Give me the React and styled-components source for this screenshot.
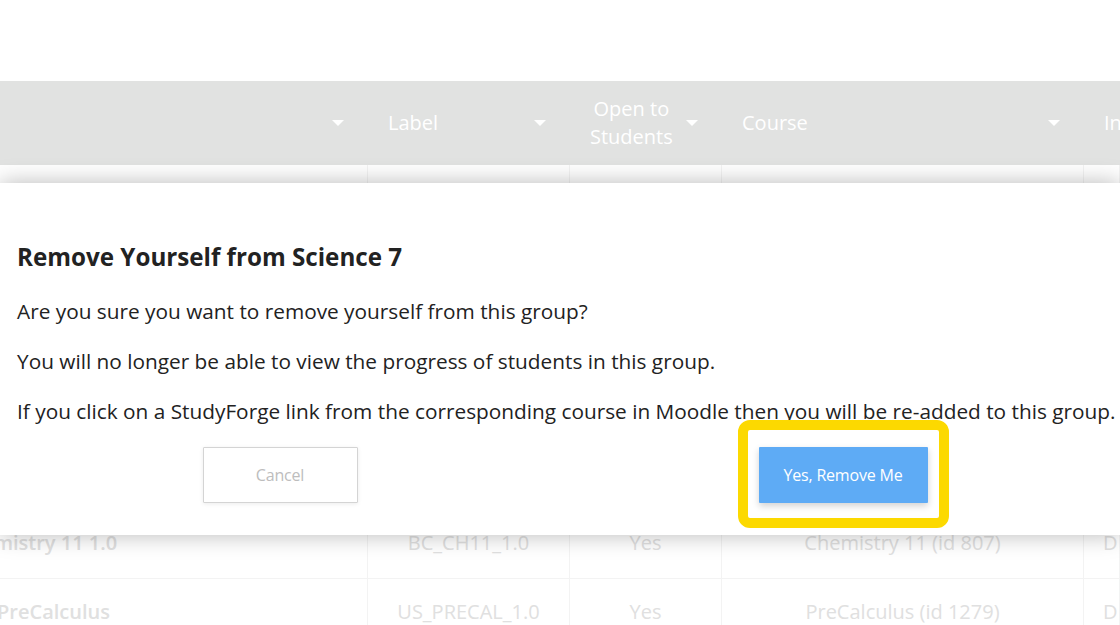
import React from 'react';
import styled, { createGlobalStyle } from 'styled-components';

const GlobalStyle = createGlobalStyle`
  html, body {
    margin: 0;
    padding: 0;
    background: #ffffff;
    font-family: "Open Sans", "Liberation Sans", sans-serif;
  }
`;

// Página com a tabela esmaecida ao fundo
const Page = styled.div`
  position: relative;
  width: 1120px;
  height: 625px;
  overflow: hidden;
  background: #ffffff;
  padding-top: 81px;
  box-sizing: border-box;
`;

const COLS = '368px 202px 152px 362px 1fr';

const HeaderRow = styled.div`
  display: grid;
  grid-template-columns: ${COLS};
  height: 84px;
  background: #e1e2e1;
`;

const HeaderCell = styled.div`
  display: flex;
  align-items: center;
  justify-content: space-between;
  padding: 0 24px 0 20px;
  color: #ffffff;
  font-size: 20px;
  line-height: 28px;
  font-weight: 400;
`;

const HeaderLabel = styled.span`
  text-align: ${({ center }) => (center ? 'center' : 'left')};
  white-space: pre-line;
`;

const Caret = styled.span`
  width: 0;
  height: 0;
  margin-left: auto;
  border-left: 6px solid transparent;
  border-right: 6px solid transparent;
  border-top: 6px solid #ffffff;
`;

const BodyRow = styled.div`
  display: grid;
  grid-template-columns: ${COLS};
  height: 69px;
  border-bottom: 1px solid #f3f3f3;
  box-sizing: border-box;
`;

const BodyCell = styled.div`
  display: flex;
  align-items: center;
  justify-content: ${({ left }) => (left ? 'flex-start' : 'center')};
  padding-left: ${({ left }) => (left ? '19px' : '0')};
  padding-bottom: 3px;
  border-right: 1px solid #f3f3f3;
  color: #e0e0e0;
  font-size: 20px;
  font-weight: ${({ bold }) => (bold ? 600 : 400)};
  white-space: nowrap;
`;

const RowName = styled.span`
  margin-left: ${({ shift }) => shift}px;
`;

// Modal de confirmação
const Modal = styled.div`
  position: absolute;
  top: 183px;
  left: 0;
  right: 0;
  height: 352px;
  background: #ffffff;
  box-shadow: 0 0 22px rgba(0, 0, 0, 0.28);
  padding: 58px 0 0 17px;
  box-sizing: border-box;
  color: #222222;
`;

const Title = styled.h2`
  margin: 0 0 24px;
  font-size: 24.2px;
  line-height: 32px;
  font-weight: 700;
`;

const Text = styled.p`
  margin: 0 0 21px;
  font-size: 20.8px;
  line-height: 29px;
  white-space: nowrap;
`;

const Actions = styled.div`
  display: grid;
  grid-template-columns: 1fr 1fr;
  margin-left: -17px;
  margin-top: 14px;
`;

const ActionSlot = styled.div`
  display: flex;
  justify-content: center;
`;

const Button = styled.button`
  height: 56px;
  padding: 0;
  font-family: "Open Sans", "Liberation Sans", sans-serif;
  font-size: 16px;
  letter-spacing: -0.2px;
  cursor: pointer;
  border-radius: 1px;
  width: ${({ primary }) => (primary ? '169px' : '155px')};
  color: ${({ primary }) => (primary ? '#ffffff' : '#bdbdbd')};
  background: ${({ primary }) => (primary ? '#5eabf5' : '#ffffff')};
  border: ${({ primary }) => (primary ? 'none' : '1px solid #d4d4d4')};
  box-shadow: ${({ primary }) =>
    primary ? '0 3px 7px rgba(0, 0, 0, 0.18)' : '0 1px 4px rgba(0, 0, 0, 0.08)'};
`;

const Highlighted = styled.div`
  position: relative;
  margin-left: 6px;
`;

// Moldura amarela de destaque
const Highlight = styled.div`
  position: absolute;
  top: -27px;
  bottom: -25px;
  left: -21px;
  right: -21px;
  border: 10px solid #fcd900;
  border-radius: 12px;
  pointer-events: none;
`;

const headers = [
  { label: '', center: false },
  { label: 'Label', center: false },
  { label: 'Open to\nStudents', center: true },
  { label: 'Course', center: false },
  { label: 'In', center: false, noCaret: true },
];

const emptyRow = { name: '', label: '', open: '', course: '', extra: '' };

const rows = [
  emptyRow,
  emptyRow,
  emptyRow,
  emptyRow,
  emptyRow,
  { name: 'Chemistry 11 1.0', shift: -62, label: 'BC_CH11_1.0', open: 'Yes', course: 'Chemistry 11 (id 807)', extra: 'D' },
  { name: 'PreCalculus', shift: -22, label: 'US_PRECAL_1.0', open: 'Yes', course: 'PreCalculus (id 1279)', extra: 'D' },
];

const App = () => (
  <>
    <GlobalStyle />
    <Page>
      <HeaderRow>
        {headers.map((h, i) => (
          <HeaderCell key={i}>
            <HeaderLabel center={h.center}>{h.label}</HeaderLabel>
            {!h.noCaret && <Caret />}
          </HeaderCell>
        ))}
      </HeaderRow>
      {rows.map((r, i) => (
        <BodyRow key={i}>
          <BodyCell left bold>
            <RowName shift={r.shift || 0}>{r.name}</RowName>
          </BodyCell>
          <BodyCell>{r.label}</BodyCell>
          <BodyCell>{r.open}</BodyCell>
          <BodyCell>{r.course}</BodyCell>
          <BodyCell left>{r.extra}</BodyCell>
        </BodyRow>
      ))}

      <Modal>
        <Title>Remove Yourself from Science 7</Title>
        <Text>Are you sure you want to remove yourself from this group?</Text>
        <Text>You will no longer be able to view the progress of students in this group.</Text>
        <Text>
          If you click on a StudyForge link from the corresponding course in Moodle then you will be re-added to this group.
        </Text>
        <Actions>
          <ActionSlot>
            <Button>Cancel</Button>
          </ActionSlot>
          <ActionSlot>
            <Highlighted>
              <Button primary>Yes, Remove Me</Button>
              <Highlight />
            </Highlighted>
          </ActionSlot>
        </Actions>
      </Modal>
    </Page>
  </>
);

export default App;
